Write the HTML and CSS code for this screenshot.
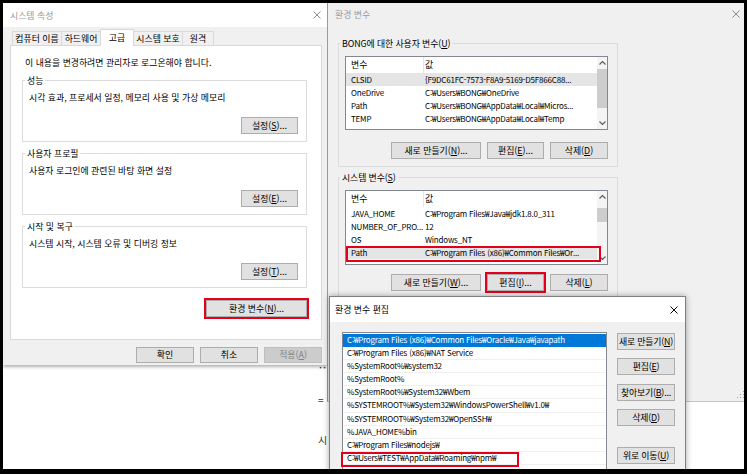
FILE: index.html
```html
<!DOCTYPE html>
<html lang="ko">
<head>
<meta charset="utf-8">
<title>환경 변수</title>
<link rel="stylesheet" href="styles.css">
</head>
<body>
<div class="frame">
  <div class="doc">
    <p class="doc-mark">▪▪</p>
    <p class="doc-line">=</p>
    <p class="doc-line">시</p>
  </div>

  <section class="win sysprop">
    <header class="titlebar">
      <span class="title">시스템 속성</span>
      <svg class="x" viewBox="0 0 8 8"><path d="M0.5 0.5L7.5 7.5M7.5 0.5L0.5 7.5"/></svg>
    </header>
    <nav class="tabs">
      <span class="tab w50">컴퓨터 이름</span>
      <span class="tab w40">하드웨어</span>
      <span class="tab active">고급</span>
      <span class="tab w50">시스템 보호</span>
      <span class="tab w32">원격</span>
    </nav>
    <div class="page">
      <p class="note">이 내용을 변경하려면 관리자로 로그온해야 합니다.</p>
      <fieldset class="grp">
        <legend>성능</legend>
        <p>시각 효과, 프로세서 일정, 메모리 사용 및 가상 메모리</p>
        <div class="btnrow"><button class="btn b57">설정(<u>S</u>)...</button></div>
      </fieldset>
      <fieldset class="grp">
        <legend>사용자 프로필</legend>
        <p>사용자 로그인에 관련된 바탕 화면 설정</p>
        <div class="btnrow"><button class="btn b57">설정(<u>E</u>)...</button></div>
      </fieldset>
      <fieldset class="grp">
        <legend>시작 및 복구</legend>
        <p>시스템 시작, 시스템 오류 및 디버깅 정보</p>
        <div class="btnrow"><button class="btn b57">설정(<u>T</u>)...</button></div>
      </fieldset>
      <div class="btnrow envrow"><button class="btn b101 hl">환경 변수(<u>N</u>)...</button></div>
    </div>
    <footer class="foot">
      <button class="btn b58">확인</button>
      <button class="btn b58">취소</button>
      <button class="btn b58" disabled>적용(<u>A</u>)</button>
    </footer>
  </section>

  <section class="win env">
    <header class="titlebar">
      <span class="title">환경 변수</span>
      <svg class="x" viewBox="0 0 8 8"><path d="M0.5 0.5L7.5 7.5M7.5 0.5L0.5 7.5"/></svg>
    </header>
    <div class="envbody">
      <fieldset class="grp2">
        <legend>BONG에 대한 사용자 변수(<u>U</u>)</legend>
        <div class="lv lv1">
          <div class="lv-main">
            <div class="lv-head"><span class="c1">변수</span><span class="c2">값</span></div>
            <div class="lv-row sel"><span class="c1">CLSID</span><span class="c2">{F9DC61FC-7573-F8A9-5169-D5F866C88...</span></div>
            <div class="lv-row"><span class="c1">OneDrive</span><span class="c2">C:₩Users₩BONG₩OneDrive</span></div>
            <div class="lv-row"><span class="c1">Path</span><span class="c2">C:₩Users₩BONG₩AppData₩Local₩Micros...</span></div>
            <div class="lv-row"><span class="c1">TEMP</span><span class="c2">C:₩Users₩BONG₩AppData₩Local₩Temp</span></div>
          </div>
          <div class="sb">
            <svg class="arr" viewBox="0 0 7 4"><path d="M0.5 3.5L3.5 0.5L6.5 3.5"/></svg>
            <span class="thumb t1"></span>
            <svg class="arr down" viewBox="0 0 7 4"><path d="M0.5 0.5L3.5 3.5L6.5 0.5"/></svg>
          </div>
        </div>
        <div class="btnrow gap">
          <button class="btn b90">새로 만들기(<u>N</u>)...</button>
          <button class="btn b57">편집(<u>E</u>)...</button>
          <button class="btn b58">삭제(<u>D</u>)</button>
        </div>
      </fieldset>
      <fieldset class="grp2 second">
        <legend>시스템 변수(<u>S</u>)</legend>
        <div class="lv lv2">
          <div class="lv-main">
            <div class="lv-head"><span class="c1">변수</span><span class="c2">값</span></div>
            <div class="lv-row"><span class="c1">JAVA_HOME</span><span class="c2">C:₩Program Files₩Java₩jdk1.8.0_311</span></div>
            <div class="lv-row"><span class="c1">NUMBER_OF_PRO...</span><span class="c2">12</span></div>
            <div class="lv-row"><span class="c1">OS</span><span class="c2">Windows_NT</span></div>
            <div class="lv-row sel"><span class="c1">Path</span><span class="c2">C:₩Program Files (x86)₩Common Files₩Or...</span><span class="mark m-path"></span></div>
          </div>
          <div class="sb">
            <svg class="arr" viewBox="0 0 7 4"><path d="M0.5 3.5L3.5 0.5L6.5 3.5"/></svg>
            <span class="thumb t2"></span>
            <svg class="arr down" viewBox="0 0 7 4"><path d="M0.5 0.5L3.5 3.5L6.5 0.5"/></svg>
          </div>
        </div>
        <div class="btnrow gap">
          <button class="btn b90">새로 만들기(<u>W</u>)...</button>
          <button class="btn b57 hl">편집(<u>I</u>)...</button>
          <button class="btn b58">삭제(<u>L</u>)</button>
        </div>
      </fieldset>
    </div>
    <svg class="grip" viewBox="0 0 9 9"><path d="M7 1h1v1H7zM4 4h1v1H4zM7 4h1v1H7zM1 7h1v1H1zM4 7h1v1H4zM7 7h1v1H7z"/></svg>
  </section>

  <section class="win edit">
    <header class="titlebar">
      <span class="title">환경 변수 편집</span>
      <svg class="x" viewBox="0 0 8 8"><path d="M0.5 0.5L7.5 7.5M7.5 0.5L0.5 7.5"/></svg>
    </header>
    <div class="editbody">
      <div class="plist">
        <div class="pitem sel">C:₩Program Files (x86)₩Common Files₩Oracle₩Java₩javapath</div>
        <div class="pitem">C:₩Program Files (x86)₩NAT Service</div>
        <div class="pitem">%SystemRoot%₩system32</div>
        <div class="pitem">%SystemRoot%</div>
        <div class="pitem">%SystemRoot%₩System32₩Wbem</div>
        <div class="pitem">%SYSTEMROOT%₩System32₩WindowsPowerShell₩v1.0₩</div>
        <div class="pitem">%SYSTEMROOT%₩System32₩OpenSSH₩</div>
        <div class="pitem">%JAVA_HOME%bin</div>
        <div class="pitem">C:₩Program Files₩nodejs₩</div>
        <div class="pitem">C:₩Users₩TEST₩AppData₩Roaming₩npm₩<span class="mark m-npm"></span></div>
        <div class="pitem"></div>
      </div>
      <div class="side">
        <button class="btn b58">새로 만들기(<u>N</u>)</button>
        <button class="btn b58">편집(<u>E</u>)</button>
        <button class="btn b58">찾아보기(<u>B</u>)...</button>
        <button class="btn b58">삭제(<u>D</u>)</button>
        <button class="btn b58 up">위로 이동(<u>U</u>)</button>
      </div>
    </div>
  </section>
</div>
</body>
</html>
```

FILE: styles.css
```css
* { box-sizing: border-box; }
html, body { margin: 0; padding: 0; }
body {
  width: 750px;
  height: 474px;
  overflow: hidden;
  background: #fff;
  font-family: "Noto Sans CJK KR", "Noto Sans", sans-serif;
  font-size: 8.9px;
  line-height: 13px;
  color: #000;
}
p { margin: 0; }
u { text-decoration: underline; text-underline-offset: 1px; }

.frame {
  position: relative;
  width: 747px;
  height: 474px;
  border-style: solid;
  border-color: #000;
  border-width: 3px 3px 5px 3px;
  background: #fff;
  overflow: hidden;
}

/* document behind the windows */
.doc {
  position: absolute;
  left: 315px;
  top: 360px;
  display: flex;
  flex-direction: column;
  color: #333;
  font-size: 10px;
  line-height: 14px;
}
.doc-mark { font-size: 5px; line-height: 8px; margin-bottom: 22px; letter-spacing: -1px; }
.doc-line + .doc-line { margin-top: 26px; }

/* windows */
.win {
  position: absolute;
  display: flex;
  flex-direction: column;
  background: #f0f0f0;
}
.titlebar {
  flex: none;
  display: flex;
  align-items: center;
  justify-content: space-between;
  background: #fff;
}
.title { color: #9a9a9a; }
.x { width: 8px; height: 8px; fill: none; stroke: #8c8c8c; stroke-width: 1; }

/* buttons */
.btn {
  font: inherit;
  color: #000;
  height: 17px;
  line-height: 15px;
  padding: 0;
  background: #e1e1e1;
  border: 1px solid #adadad;
  border-radius: 0;
  text-align: center;
  white-space: nowrap;
}
.btn:disabled { background: #cccccc; border-color: #bfbfbf; color: #838383; }
.b57 { width: 57px; }
.b58 { width: 58px; }
.b90 { width: 90px; }
.b101 { width: 101px; }
.hl { outline: 2px solid #e3001b; outline-offset: 0; }
.btnrow { display: flex; justify-content: flex-end; }

/* System properties */
.sysprop {
  left: 0;
  top: 0;
  width: 324px;
  height: 362px;
  box-shadow: 0 2px 3px rgba(0, 0, 0, .3);
}
.sysprop .titlebar { height: 24px; padding: 0 6px 0 7px; }
.tabs {
  flex: none;
  position: relative;
  z-index: 2;
  display: flex;
  align-items: flex-end;
  height: 18px;
  padding-left: 9px;
}
.tab {
  height: 14px;
  line-height: 13px;
  border: 1px solid #d9d9d9;
  border-bottom: 0;
  margin-right: -1px;
  text-align: center;
  background: #f0f0f0;
  white-space: nowrap;
}
.w50 { width: 50px; }
.w40 { width: 40px; }
.w32 { width: 32px; }
.tab.active {
  width: 34px;
  height: 17px;
  margin-bottom: -1px;
  background: #fff;
  line-height: 15px;
}
.page {
  flex: none;
  margin: 0 5px 0 7px;
  height: 295px;
  background: #fff;
  border: 1px solid #d9d9d9;
  padding: 10px 14px 0 11px;
}
.note { margin-left: 3px; }
.grp {
  margin: 5px 0 0;
  padding: 4px 8px 7px 6px;
  border: 1px solid #dcdcdc;
  min-inline-size: 0;
}
.grp legend, .grp2 legend {
  padding: 0 2px;
  margin-left: -4px;
  line-height: 13px;
}
.grp .btnrow { margin-top: 13px; }
.envrow { margin-top: 12px; }
.foot {
  flex: none;
  display: flex;
  justify-content: flex-end;
  gap: 6px;
  padding: 7px 5px 0 0;
}
.foot .btn { height: 16px; line-height: 14px; }

/* Environment variables */
.env {
  left: 324px;
  top: 0;
  width: 420px;
  height: 399px;
  border-left: 1px solid #9a9a9a;
  border-bottom: 1px solid #c4c4c4;
}
.env .titlebar { height: 22px; padding: 0 7px; background: #f0f0f0; }
.envbody { padding: 12px 0 0 10px; }
.grp2 {
  width: 280px;
  margin: 0;
  padding: 6px 9px 7px 6px;
  border: 1px solid #dcdcdc;
  min-inline-size: 0;
}
.grp2 legend { margin-left: -5px; letter-spacing: -0.1px; }
.grp2.second { margin-top: 4px; }
.grp2 .btnrow { margin-top: 12px; gap: 6px; }
.grp2.second .btnrow { margin-top: 9px; }

.lv {
  position: relative;
  display: flex;
  background: #fff;
  border: 1px solid #828790;
  overflow: hidden;
}
.lv1 { height: 74px; }
.lv2 { height: 75px; }
.lv-main { position: relative; z-index: 2; flex: 1; min-width: 0; }
.lv-head, .lv-row { display: flex; white-space: nowrap; }
.lv-head { height: 16px; line-height: 15px; }
.lv-head .c1 { border-right: 1px solid #e5e5e5; }
.lv-row {
  position: relative;
  height: 13px;
  line-height: 13px;
  font-size: 8px;
  letter-spacing: -0.2px;
}
.lv-row.sel { background: #e5e5e5; }
.c1 { flex: none; width: 78px; padding-left: 5px; overflow: hidden; }
.c2 { flex: 1; padding-left: 1px; overflow: hidden; }
.sb {
  position: relative;
  z-index: 1;
  flex: none;
  width: 10px;
  display: flex;
  flex-direction: column;
  align-items: center;
  background: #f4f4f4;
}
.arr {
  flex: none;
  width: 7px;
  height: 4px;
  margin: 4px 0;
  fill: none;
  stroke: #606060;
  stroke-width: 1.2;
}
.arr.down { margin-top: auto; }
.thumb { flex: none; width: 10px; background: #cdcdcd; }
.t1 { height: 39px; }
.t2 { height: 14px; margin-top: 5px; }
.mark {
  position: absolute;
  z-index: 3;
  border: 2px solid #e3001b;
  pointer-events: none;
}
.m-path { left: 0; top: 0; width: 255px; height: 16px; }
.grip {
  position: absolute;
  right: 2px;
  bottom: 2px;
  width: 9px;
  height: 9px;
  fill: #a0a0a0;
}

/* Edit environment variable */
.edit {
  left: 326px;
  top: 293px;
  width: 357px;
  height: 200px;
  border: 1px solid #7f7f7f;
  box-shadow: 0 0 6px rgba(0, 0, 0, .35);
}
.edit .titlebar { height: 25px; padding: 0 7px 0 5px; }
.edit .title { color: #000; }
.edit .x { stroke: #000; }
.editbody { display: flex; gap: 10px; padding: 10px 0 0 12px; }
.plist {
  flex: none;
  width: 265px;
  height: 160px;
  padding-top: 1px;
  background: #fff;
  border: 1px solid #828790;
}
.pitem {
  position: relative;
  height: 13.1px;
  line-height: 12.1px;
  padding-left: 4px;
  border-bottom: 1px solid #f0f0f0;
  white-space: nowrap;
  font-size: 8px;
  letter-spacing: -0.2px;
}
.pitem.sel { background: #0078d7; color: #fff; border-bottom-color: #0078d7; }
.m-npm { left: -2px; top: 0; width: 178px; height: 15px; }
.side { display: flex; flex-direction: column; gap: 8px; padding-top: 1px; }
.side .btn { letter-spacing: -0.2px; }
.side .btn:nth-child(3) { margin-top: 1px; }
.side .up { margin-top: 13px; }
```
